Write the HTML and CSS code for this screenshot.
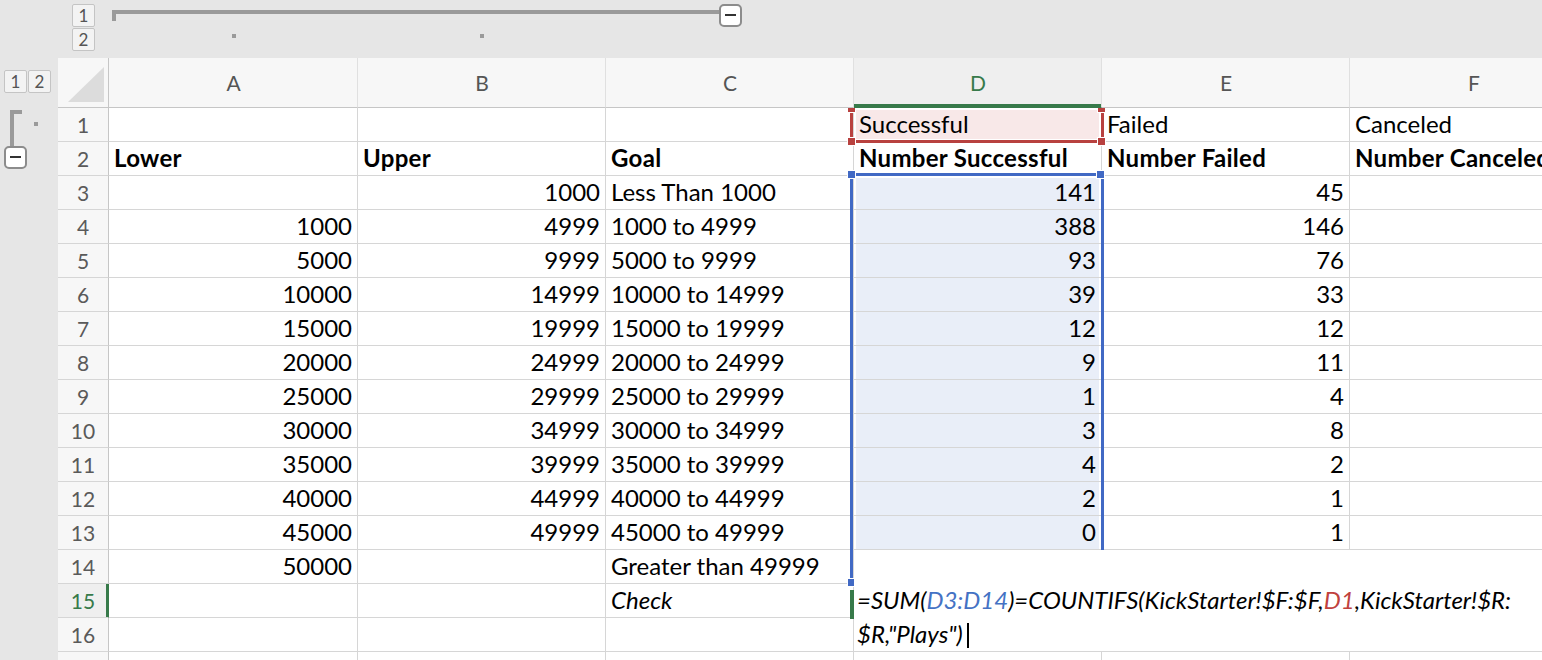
FILE: index.html
```html
<!DOCTYPE html>
<html>
<head>
<meta charset="utf-8">
<link rel="stylesheet" href="styles.css">
</head>
<body>
<div class="app">
  <div class="outline-top">
    <div class="levels-v"><span class="lvl">1</span><span class="lvl">2</span></div>
    <div class="col-group">
      <div class="bracket-h"></div>
      <span class="collapse"></span>
    </div>
    <span class="dot dot-a"></span><span class="dot dot-b"></span>
  </div>
  <div class="outline-left">
    <div class="levels-h"><span class="lvl">1</span><span class="lvl">2</span></div>
    <div class="bracket-v"></div>
    <span class="collapse"></span>
    <span class="dot dot-c"></span>
  </div>
  <div class="sheet">
    <div class="grid">
      <div class="c corner"><svg width="50" height="49" viewBox="0 0 50 49"><polygon points="10,44 46,9 46,44" fill="#dcdcdc"/></svg></div>
      <div class="c ch">A</div><div class="c ch">B</div><div class="c ch">C</div><div class="c ch ch-act">D</div><div class="c ch">E</div><div class="c ch">F</div>

      <div class="c rh">1</div><div class="c"></div><div class="c"></div><div class="c"></div><div class="c red-fill">Successful</div><div class="c">Failed</div><div class="c">Canceled</div>
      <div class="c rh">2</div><div class="c b">Lower</div><div class="c b">Upper</div><div class="c b">Goal</div><div class="c b">Number Successful</div><div class="c b">Number Failed</div><div class="c b">Number Canceled</div>
      <div class="c rh">3</div><div class="c"></div><div class="c num">1000</div><div class="c">Less Than 1000</div><div class="c num blue-fill first">141</div><div class="c num">45</div><div class="c"></div>
      <div class="c rh">4</div><div class="c num">1000</div><div class="c num">4999</div><div class="c">1000 to 4999</div><div class="c num blue-fill">388</div><div class="c num">146</div><div class="c"></div>
      <div class="c rh">5</div><div class="c num">5000</div><div class="c num">9999</div><div class="c">5000 to 9999</div><div class="c num blue-fill">93</div><div class="c num">76</div><div class="c"></div>
      <div class="c rh">6</div><div class="c num">10000</div><div class="c num">14999</div><div class="c">10000 to 14999</div><div class="c num blue-fill">39</div><div class="c num">33</div><div class="c"></div>
      <div class="c rh">7</div><div class="c num">15000</div><div class="c num">19999</div><div class="c">15000 to 19999</div><div class="c num blue-fill">12</div><div class="c num">12</div><div class="c"></div>
      <div class="c rh">8</div><div class="c num">20000</div><div class="c num">24999</div><div class="c">20000 to 24999</div><div class="c num blue-fill">9</div><div class="c num">11</div><div class="c"></div>
      <div class="c rh">9</div><div class="c num">25000</div><div class="c num">29999</div><div class="c">25000 to 29999</div><div class="c num blue-fill">1</div><div class="c num">4</div><div class="c"></div>
      <div class="c rh">10</div><div class="c num">30000</div><div class="c num">34999</div><div class="c">30000 to 34999</div><div class="c num blue-fill">3</div><div class="c num">8</div><div class="c"></div>
      <div class="c rh">11</div><div class="c num">35000</div><div class="c num">39999</div><div class="c">35000 to 39999</div><div class="c num blue-fill">4</div><div class="c num">2</div><div class="c"></div>
      <div class="c rh">12</div><div class="c num">40000</div><div class="c num">44999</div><div class="c">40000 to 44999</div><div class="c num blue-fill">2</div><div class="c num">1</div><div class="c"></div>
      <div class="c rh">13</div><div class="c num">45000</div><div class="c num">49999</div><div class="c">45000 to 49999</div><div class="c num blue-fill">0</div><div class="c num">1</div><div class="c"></div>
      <div class="c rh">14</div><div class="c num">50000</div><div class="c"></div><div class="c">Greater than 49999</div><div class="c"></div><div class="c"></div><div class="c"></div>
      <div class="c rh rh-act">15</div><div class="c"></div><div class="c"></div><div class="c i">Check</div><div class="c"></div><div class="c"></div><div class="c"></div>
      <div class="c rh">16</div><div class="c"></div><div class="c"></div><div class="c"></div><div class="c"></div><div class="c"></div><div class="c"></div>
      <div class="c rh">17</div><div class="c"></div><div class="c"></div><div class="c"></div><div class="c"></div><div class="c"></div><div class="c"></div>
    </div>
    <div class="overlays">
      <div class="rng-red"></div>
      <span class="hdl hdl-red h-r1"></span><span class="hdl hdl-red h-r2"></span><span class="hdl hdl-red h-r3"></span><span class="hdl hdl-red h-r4"></span>
      <div class="rng-blue"></div>
      <span class="hdl hdl-blue h-b1"></span><span class="hdl hdl-blue h-b2"></span><span class="hdl hdl-blue h-b3"></span>
      <div class="editor">
        <div class="eline">=SUM(<span class="ref-b">D3:D14</span>)=COUNTIFS(KickStarter!$F:$F,<span class="ref-r">D1</span>,KickStarter!$R:</div>
        <div class="eline">$R,"Plays")<span class="caret"></span></div>
      </div>
      <div class="active-mark"></div>
    </div>
  </div>
</div>
</body>
</html>
```

FILE: styles.css
```css
* { box-sizing: border-box; }
html, body { margin: 0; padding: 0; }
body { background: #e6e6e6; font-family: Lato, "Liberation Sans", sans-serif; }

.app {
  display: grid;
  grid-template-columns: 58px 1fr;
  grid-template-rows: 58px 602px;
  width: 1542px;
  height: 660px;
  overflow: hidden;
  background: #e6e6e6;
}

/* outline bars */
.outline-top {
  grid-column: 1 / -1;
  position: relative;
  display: flex;
  align-items: flex-start;
  padding: 4px 0 0 72px;
}
.levels-v { display: flex; flex-direction: column; gap: 1px; }
.levels-h { display: flex; gap: 1px; }
.lvl {
  display: flex;
  align-items: center;
  justify-content: center;
  width: 23px;
  height: 23px;
  border: 1px solid #c4c4c4;
  border-radius: 2px;
  background: #f3f3f3;
  color: #555;
  font-size: 17px;
  line-height: 1;
}
.col-group { display: flex; align-items: flex-start; margin-left: 17px; }
.bracket-h {
  width: 607px;
  height: 11px;
  margin-top: 6px;
  border-top: 4px solid #9a9a9a;
  border-left: 4px solid #9a9a9a;
}
.collapse {
  display: block;
  position: relative;
  width: 23px;
  height: 23px;
  border: 2px solid #8c8c8c;
  border-radius: 5px;
  background: #fff;
}
.collapse::after {
  content: "";
  position: absolute;
  left: 4px;
  top: 8px;
  width: 11px;
  height: 2px;
  background: #333;
}
.dot { position: absolute; width: 4px; height: 4px; background: #9a9a9a; }
.dot-a { left: 232px; top: 34px; }
.dot-b { left: 480px; top: 34px; }
.dot-c { left: 34px; top: 64px; }

.outline-left { position: relative; padding: 12px 0 0 4px; }
.bracket-v {
  width: 12px;
  height: 36px;
  margin: 17px 0 0 6px;
  border-top: 4px solid #9a9a9a;
  border-left: 4px solid #9a9a9a;
}

/* sheet */
.sheet { position: relative; overflow: hidden; background: #fff; }
.grid {
  display: grid;
  grid-template-columns: 51px 249px repeat(5, 248px);
  grid-template-rows: 50px repeat(17, 34px);
  width: max-content;
}
.c {
  border-right: 1px solid #d6d6d6;
  border-bottom: 1px solid #d6d6d6;
  background: #fff;
  font-size: 24px;
  line-height: 31px;
  padding: 0 4px 0 5px;
  white-space: nowrap;
  overflow: hidden;
  color: #000;
}
.num { text-align: right; padding-right: 5px; }
.b { font-weight: 700; letter-spacing: 0.3px; }
.i { font-style: italic; }

.corner {
  padding: 0;
  background: #f7f7f7;
  border-right: 1px solid #c6c6c6;
  border-bottom: 1px solid #c6c6c6;
}
.corner svg { display: block; }
.ch {
  background: #f7f7f7;
  border-bottom: 1px solid #c6c6c6;
  border-right: 1px solid #e0e0e0;
  text-align: center;
  font-size: 21px;
  line-height: 49px;
  color: #555;
}
.ch-act {
  background: #efefef;
  color: #377a4a;
  border-bottom-color: #377a4a;
  box-shadow: inset 0 -3px 0 #377a4a;
}
.rh {
  background: #f7f7f7;
  border-right: 1px solid #c6c6c6;
  text-align: center;
  font-size: 21px;
  line-height: 33px;
  color: #5a5a5a;
  padding: 0;
}
.rh-act {
  background: #efefef;
  color: #377a4a;
  border-right-color: #377a4a;
  box-shadow: inset -2px 0 0 #377a4a;
}

.red-fill { background: #f8e8e8; box-shadow: inset 0 0 0 2px #fff; }
.blue-fill { background: #e9eef8; box-shadow: inset 2px 0 0 #fff, inset -2px 0 0 #fff; }
.blue-fill.first { box-shadow: inset 2px 0 0 #fff, inset -2px 0 0 #fff, inset 0 2px 0 #fff; }

/* overlays: origin at page (58,108) */
.overlays {
  position: absolute;
  left: 0;
  top: 50px;
  right: 0;
  bottom: 0;
  overflow: hidden;
  pointer-events: none;
}
.rng-red {
  position: absolute;
  left: 792px;
  top: 0;
  width: 254px;
  height: 35px;
  border: 3px solid #b8413f;
  border-top: 0;
}
.rng-blue {
  position: absolute;
  left: 792px;
  top: 65px;
  width: 254px;
  height: 411px;
  border: 3px solid #4169c4;
}
.hdl {
  position: absolute;
  width: 9px;
  height: 9px;
  border: 1px solid #fff;
}
.hdl-red { background: #b8413f; }
.hdl-blue { background: #4169c4; }
.h-r1 { left: 789px; top: -4px; }
.h-r2 { left: 1039px; top: -4px; }
.h-r3 { left: 789px; top: 29px; }
.h-r4 { left: 1039px; top: 29px; }
.h-b1 { left: 789px; top: 62px; }
.h-b2 { left: 1038px; top: 62px; }
.h-b3 { left: 789px; top: 470px; }

.editor {
  position: absolute;
  left: 796px;
  top: 442px;
  right: 0;
  height: 101px;
  background: #fff;
  padding: 34px 0 0 3px;
  font-style: italic;
  font-size: 24px;
  line-height: 32px;
  white-space: nowrap;
  color: #000;
}
.eline + .eline { line-height: 36px; }
.ref-b { color: #4472c4; }
.ref-r { color: #c0413d; }
.caret {
  display: inline-block;
  width: 2px;
  height: 25px;
  margin-left: 4px;
  background: #000;
  vertical-align: -5px;
}
.active-mark {
  position: absolute;
  left: 792px;
  top: 482px;
  width: 4px;
  height: 29px;
  background: #377a4a;
}
```
